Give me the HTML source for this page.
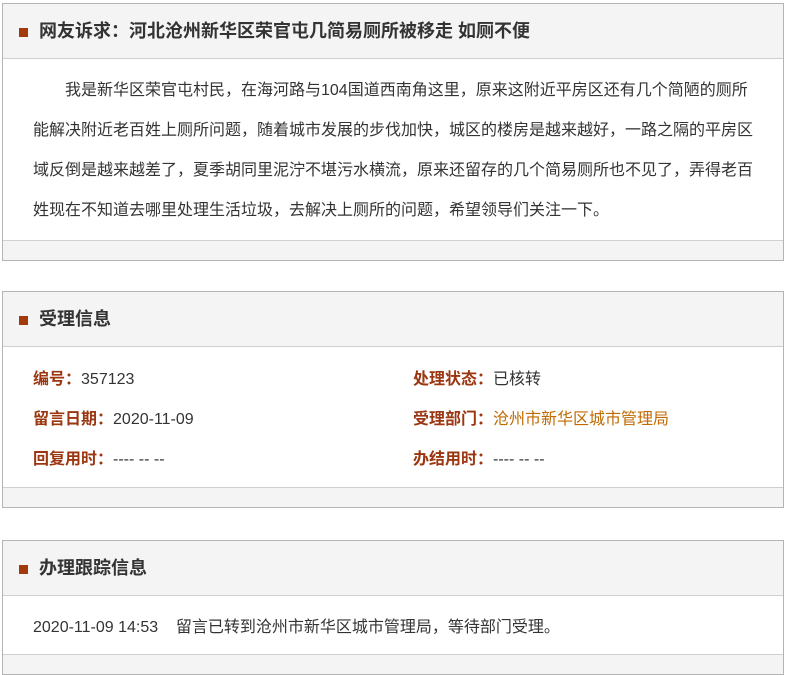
<!DOCTYPE html>
<html><head><meta charset="utf-8"><style>
body{margin:0;background:#fff;font-family:"Liberation Sans","Noto Sans CJK SC",sans-serif;color:#333;width:788px;height:662px;overflow:hidden;position:relative}
.box{position:absolute;left:2px;width:780px;border:1px solid #b4b4b4;background:#fff}
.hd{height:54px;background:#f4f4f4;border-bottom:1px solid #d0d0d0;position:relative}
.hd i{position:absolute;left:16px;top:24px;width:9px;height:9px;background:#a33a0c}
.hd b{position:absolute;left:36px;top:16px;font-size:18px;line-height:22px;color:#333}
.ft{height:19px;background:#f4f4f4;border-top:1px solid #d0d0d0}
.p{padding:12px 20px 9px 30px;font-size:16px;line-height:40px;white-space:nowrap;letter-spacing:0}
.row{position:relative;height:40px;font-size:16px}
.row span{position:absolute;top:8px}
.l{color:#9b3610;font-weight:bold}
</style></head><body>
<div class="box" style="top:3px">
<div class="hd"><i></i><b>网友诉求：河北沧州新华区荣官屯几简易厕所被移走 如厕不便</b></div>
<div class="p"><span style="padding-left:32px"></span>我是新华区荣官屯村民，在海河路与104国道西南角这里，原来这附近平房区还有几个简陋的厕所<br>能解决附近老百姓上厕所问题，随着城市发展的步伐加快，城区的楼房是越来越好，一路之隔的平房区<br>域反倒是越来越差了，夏季胡同里泥泞不堪污水横流，原来还留存的几个简易厕所也不见了，弄得老百<br>姓现在不知道去哪里处理生活垃圾，去解决上厕所的问题，希望领导们关注一下。</div>
<div class="ft"></div>
</div>
<div class="box" style="top:291px">
<div class="hd"><i></i><b>受理信息</b></div>
<div style="padding-top:10px;height:130px">
<div class="row"><span style="left:30px"><span class="l" style="position:static">编号：</span>357123</span><span style="left:410px"><span class="l" style="position:static">处理状态：</span>已核转</span></div>
<div class="row"><span style="left:30px"><span class="l" style="position:static">留言日期：</span>2020-11-09</span><span style="left:410px"><span class="l" style="position:static">受理部门：</span><span style="position:static;color:#c06a00">沧州市新华区城市管理局</span></span></div>
<div class="row"><span style="left:30px"><span class="l" style="position:static">回复用时：</span>---- -- --</span><span style="left:410px"><span class="l" style="position:static">办结用时：</span>---- -- --</span></div>
</div>
<div class="ft"></div>
</div>
<div class="box" style="top:540px">
<div class="hd"><i></i><b>办理跟踪信息</b></div>
<div style="height:58px;position:relative;font-size:16px"><span style="position:absolute;left:30px;top:17px">2020-11-09 14:53&nbsp;&nbsp;&nbsp;&nbsp;留言已转到沧州市新华区城市管理局，等待部门受理。</span></div>
<div class="ft"></div>
</div>
</body></html>
